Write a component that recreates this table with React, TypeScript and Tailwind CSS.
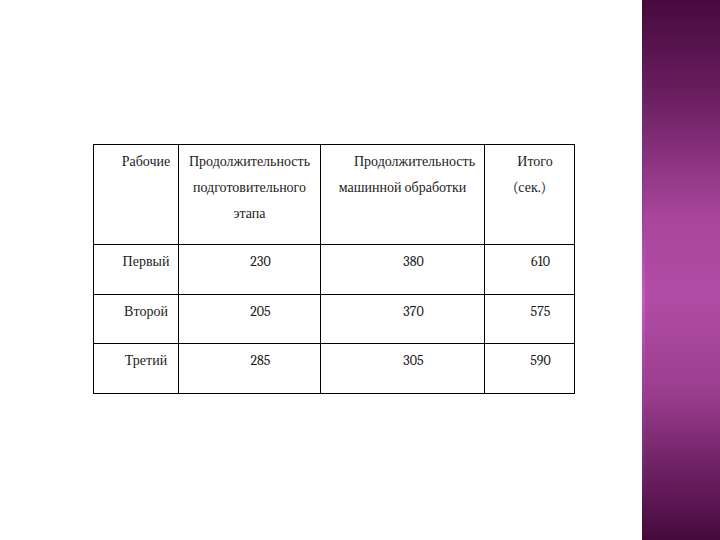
const rows = [
  { name: "Первый", prep: "230", machine: "380", total: "610" },
  { name: "Второй", prep: "205", machine: "370", total: "575" },
  { name: "Третий", prep: "285", machine: "305", total: "590" },
];

const cell = "border border-black align-top pt-[4px] text-center";

export default function App() {
  return (
    <div className="flex w-[720px] h-[540px] bg-white text-[#1c1c1c] font-serif text-[14px] leading-[26px]">
      <div className="flex-1 pt-[144px] pl-[93px]">
        <table className="border-collapse table-fixed w-[481px]">
          <colgroup>
            <col className="w-[85px]" />
            <col className="w-[142px]" />
            <col className="w-[164px]" />
            <col className="w-[90px]" />
          </colgroup>
          <thead>
            <tr className="h-[100px]">
              <th className={`${cell} font-normal pl-[20px]`}>Рабочие</th>
              <th className={`${cell} font-normal`}>
                <div>Продолжительность</div>
                <div>подготовительного</div>
                <div>этапа</div>
              </th>
              <th className={`${cell} font-normal`}>
                <div className="pl-[24px]">Продолжительность</div>
                <div>машинной обработки</div>
              </th>
              <th className={`${cell} font-normal`}>
                <div className="pl-[11px]">Итого</div>
                <div>(сек.)</div>
              </th>
            </tr>
          </thead>
          <tbody>
            {rows.map((r, i) => (
              <tr key={r.name} className={i === 1 ? "h-[49px]" : "h-[50px]"}>
                <td className={`${cell} pl-[20px]`}>{r.name}</td>
                <td className={`${cell} pl-[22px]`}>{r.prep}</td>
                <td className={`${cell} pl-[22px]`}>{r.machine}</td>
                <td className={`${cell} pl-[22px]`}>{r.total}</td>
              </tr>
            ))}
          </tbody>
        </table>
      </div>
      <div className="relative w-[78px] h-full bg-[linear-gradient(to_bottom,#480a3e_0%,#6a1f60_18%,#a9459c_40%,#b24ca6_55%,#9c3e90_72%,#6a1f60_88%,#470a3d_100%)]">
        <div className="absolute left-0 top-0 h-full w-[3px] bg-[linear-gradient(to_bottom,#3a0c3a_0%,#7a3a80_30%,#c060b8_55%,#7a3a80_80%,#3a0c3a_100%)]" />
      </div>
    </div>
  );
}
